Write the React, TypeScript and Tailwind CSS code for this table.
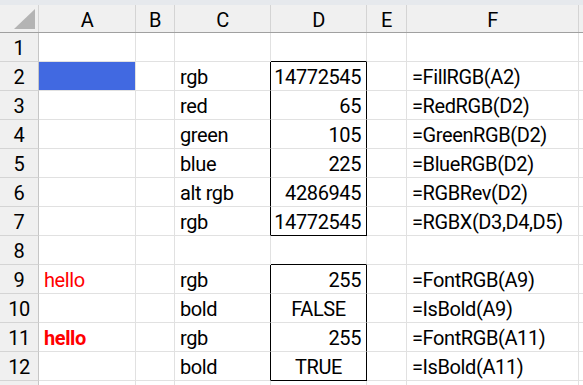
import { type ReactNode } from 'react';
import { clsx } from 'clsx';

type Cell = { text?: ReactNode; align?: 'left' | 'right' | 'center'; className?: string };

const cols = ['A', 'B', 'C', 'D', 'E', 'F', 'G'];
const widths = ['w-[97px]', 'w-[39px]', 'w-[96px]', 'w-[96px]', 'w-[40px]', 'w-[172px]', 'w-[100px]'];

const rows: Record<number, Record<string, Cell>> = {
  2: { A: { className: 'bg-[#4169e1]' }, C: { text: 'rgb' }, D: { text: '14772545', align: 'right' }, F: { text: '=FillRGB(A2)' } },
  3: { C: { text: 'red' }, D: { text: '65', align: 'right' }, F: { text: '=RedRGB(D2)' } },
  4: { C: { text: 'green' }, D: { text: '105', align: 'right' }, F: { text: '=GreenRGB(D2)' } },
  5: { C: { text: 'blue' }, D: { text: '225', align: 'right' }, F: { text: '=BlueRGB(D2)' } },
  6: { C: { text: 'alt rgb' }, D: { text: '4286945', align: 'right' }, F: { text: '=RGBRev(D2)' } },
  7: { C: { text: 'rgb' }, D: { text: '14772545', align: 'right' }, F: { text: '=RGBX(D3,D4,D5)' } },
  9: { A: { text: 'hello', className: 'text-[#ff0000]' }, C: { text: 'rgb' }, D: { text: '255', align: 'right' }, F: { text: '=FontRGB(A9)' } },
  10: { C: { text: 'bold' }, D: { text: 'FALSE', align: 'center' }, F: { text: '=IsBold(A9)' } },
  11: { A: { text: 'hello', className: 'text-[#ff0000] font-bold' }, C: { text: 'rgb' }, D: { text: '255', align: 'right' }, F: { text: '=FontRGB(A11)' } },
  12: { C: { text: 'bold' }, D: { text: 'TRUE', align: 'center' }, F: { text: '=IsBold(A11)' } },
};

// D2:D7 and D9:D12 have a thin black outline
const boxed = (r: number) => (r >= 2 && r <= 7) || (r >= 9 && r <= 12);

function GridCell({ r, col, width }: { r: number; col: string; width: string }) {
  const cell = rows[r]?.[col] ?? {};
  const rightBlack = (col === 'C' || col === 'D') && boxed(r);
  const bottomBlack = col === 'D' && [1, 7, 8, 12].includes(r);
  return (
    <div
      className={clsx(
        'flex h-[29px] shrink-0 items-center border-b border-r px-[5px] pt-[2px] whitespace-nowrap',
        width,
        rightBlack ? 'border-r-black' : 'border-r-[#e1e1e1]',
        bottomBlack ? 'border-b-black' : 'border-b-[#e1e1e1]',
        cell.align === 'right' && 'justify-end',
        cell.align === 'center' && 'justify-center',
        cell.className,
      )}
    >
      {cell.text}
    </div>
  );
}

export default function App() {
  return (
    <div className="h-[385px] w-[583px] overflow-hidden bg-white font-[Roboto,sans-serif] text-[20px] leading-none tracking-[-0.4px] text-black">
      <div className="h-[5px] bg-[#e6e9ed]" />
      <div className="flex h-[28px] border-b border-b-[#a0a0a0] bg-[#f0f0f0]">
        <div className="flex w-[39px] shrink-0 items-end justify-end border-r border-r-[#d4d4d4] pb-[3px] pr-[3px]">
          <svg width="21" height="20" viewBox="0 0 21 20" aria-hidden="true">
            <polygon points="21,0 21,20 0,20" fill="#b4b4b4" />
          </svg>
        </div>
        {cols.map((c, i) => (
          <div key={c} className={clsx('flex shrink-0 items-center justify-center border-r border-r-[#d4d4d4] pt-[2px]', widths[i])}>
            {c === 'G' ? '' : c}
          </div>
        ))}
      </div>
      {Array.from({ length: 13 }, (_, i) => i + 1).map((r) => (
        <div key={r} className="flex">
          <div className="flex h-[29px] w-[39px] shrink-0 items-center justify-center border-b border-r border-b-[#d4d4d4] border-r-[#c6c6c6] bg-[#f0f0f0] pt-[2px]">
            {r < 13 ? r : ''}
          </div>
          {cols.map((c, i) => (
            <GridCell key={c} r={r} col={c} width={widths[i]} />
          ))}
        </div>
      ))}
    </div>
  );
}
